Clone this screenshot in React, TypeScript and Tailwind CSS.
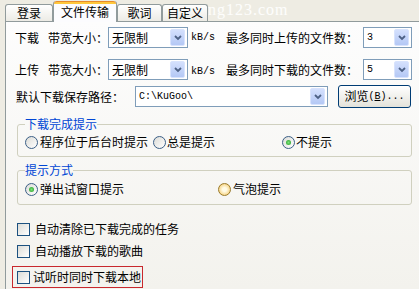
import React from "react";

const Chevron = () => (
  <svg width="8" height="6" viewBox="0 0 8 6">
    <path d="M1 1 L4 4 L7 1" fill="none" stroke="#4d6185" strokeWidth="1.8" />
  </svg>
);

function Combo({ w, text, mono }: { w: string; text: string; mono?: boolean }) {
  return (
    <div className={`flex h-[21px] ${w} items-center border border-[#7f9db9] bg-white pl-[3px] pr-[2px]`}>
      <span
        className={
          mono
            ? "flex-1 font-['Liberation_Mono',monospace] text-[10px] leading-[12px]"
            : "flex-1 leading-[14px]"
        }
      >
        {text}
      </span>
      <div className="flex h-[17px] w-[15px] items-center justify-center rounded-[2px] border border-[#d8e3fd] bg-gradient-to-b from-[#d4e0fd] to-[#b4c8f5]">
        <Chevron />
      </div>
    </div>
  );
}

function Radio({ checked, hover }: { checked?: boolean; hover?: boolean }) {
  if (hover) {
    return (
      <span className="flex h-[13px] w-[13px] shrink-0 items-center justify-center rounded-full border border-[#9a7a2a] bg-[radial-gradient(circle,#fffbe6_25%,#f3c257_100%)]" />
    );
  }
  return (
    <span className="flex h-[13px] w-[13px] shrink-0 items-center justify-center rounded-full border border-[#3b5f86] bg-gradient-to-br from-[#dcdcd7] to-white">
      {checked && <span className="h-[5px] w-[5px] rounded-full bg-[radial-gradient(circle,#7be27a_0%,#1f9a1f_100%)]" />}
    </span>
  );
}

function Checkbox() {
  return <span className="h-[13px] w-[13px] shrink-0 border border-[#1c5180] bg-gradient-to-br from-[#dcdcd7] to-white" />;
}

function Tab({ children, w }: { children: React.ReactNode; w: string }) {
  return (
    <div
      className={`flex h-[17px] ${w} items-center justify-center rounded-t-[3px] border border-b-0 border-[#919b9c] bg-gradient-to-b from-white to-[#ecebe5] leading-[14px]`}
    >
      {children}
    </div>
  );
}

export default function App() {
  return (
    <div className="relative h-[289px] w-[419px] overflow-hidden bg-[#eeece3] font-['Noto_Sans_CJK_SC','Noto_Sans',sans-serif] text-[12px] text-black">
      <span className="pointer-events-none absolute left-[208px] top-[2px] font-['Liberation_Serif',serif] text-[16px] leading-[16px] tracking-[1px] text-white/90">
        ng123.com
      </span>
      {/* tab strip */}
      <div className="flex h-[21px] items-end pl-[5px]">
        <Tab w="w-[48px]">登录</Tab>
        <div className="relative z-10 -mb-px flex h-[21px] w-[64px] flex-col rounded-t-[3px] border-x border-[#919b9c] bg-[#fcfcfe]">
          <div className="h-[3px] rounded-t-[3px] border-t border-[#e68b2c] bg-[#ffc83c]" />
          <div className="flex flex-1 items-center justify-center pb-[2px] leading-[14px]">文件传输</div>
        </div>
        <Tab w="w-[45px]">歌词</Tab>
        <Tab w="w-[46px]">自定义</Tab>
      </div>
      {/* panel */}
      <div className="ml-[5px] h-[268px] border-l border-t border-[#919b9c] bg-gradient-to-b from-[#fdfdfd] to-[#f3f2ed] pl-[9px]">
        {/* row 1 */}
        <div className="mt-[5px] flex h-[21px] items-center">
          <span className="w-[33px]">下载</span>
          <span className="w-[60px]">带宽大小：</span>
          <Combo w="w-[80px]" text="无限制" />
          <span className="ml-[3px] w-[35px] font-['Liberation_Mono',monospace] text-[10px]">kB/s</span>
          <span className="w-[137px]">最多同时上传的文件数：</span>
          <Combo w="w-[49px]" text="3" mono />
        </div>
        {/* row 2 */}
        <div className="mt-[11px] flex h-[21px] items-center">
          <span className="w-[33px]">上传</span>
          <span className="w-[60px]">带宽大小：</span>
          <Combo w="w-[80px]" text="无限制" />
          <span className="ml-[3px] mt-[4px] w-[35px] font-['Liberation_Mono',monospace] text-[10px]">kB/s</span>
          <span className="w-[137px]">最多同时下载的文件数：</span>
          <Combo w="w-[49px]" text="5" mono />
        </div>
        {/* row 3 */}
        <div className="mt-[5px] flex h-[23px] items-center">
          <span className="ml-[1px] w-[119px]">默认下载保存路径：</span>
          <Combo w="w-[193px]" text="C:\KuGoo\" mono />
          <button className="ml-[10px] flex h-[23px] w-[73px] items-center justify-center rounded-[3px] border border-[#003c74] bg-gradient-to-b from-white to-[#e3e2da] pb-[1px]">
            <span>浏览</span>
            <span className="font-['Liberation_Mono',monospace] text-[10px]">
              (<span className="underline">B</span>)...
            </span>
          </button>
        </div>
        {/* group 1 */}
        <fieldset className="ml-[2px] mt-[9px] w-[395px] rounded-[3px] border border-[#d0d0bf] px-[7px] pb-[7px]">
          <legend className="px-0 leading-[14px] text-[#0046d5]">下载完成提示</legend>
          <div className="mt-[4px] flex h-[14px] items-center">
            <div className="flex w-[128px] items-center gap-[2px]">
              <Radio />
              <span className="leading-[14px]">程序位于后台时提示</span>
            </div>
            <div className="flex w-[129px] items-center gap-[1px]">
              <Radio />
              <span className="leading-[14px]">总是提示</span>
            </div>
            <div className="flex items-center gap-[1px]">
              <Radio checked />
              <span className="leading-[14px]">不提示</span>
            </div>
          </div>
        </fieldset>
        {/* group 2 */}
        <fieldset className="ml-[2px] mt-[6px] w-[395px] rounded-[3px] border border-[#d0d0bf] px-[7px] pb-[8px]">
          <legend className="px-0 leading-[14px] text-[#0046d5]">提示方式</legend>
          <div className="mt-[5px] flex h-[14px] items-center">
            <div className="flex w-[193px] items-center gap-[2px]">
              <Radio checked />
              <span className="leading-[14px]">弹出试窗口提示</span>
            </div>
            <div className="flex items-center gap-[2px]">
              <Radio hover />
              <span className="leading-[14px]">气泡提示</span>
            </div>
          </div>
        </fieldset>
        {/* checkboxes */}
        <div className="ml-[2px] mt-[13px] flex h-[22px] items-center gap-[5px]">
          <Checkbox />
          <span className="leading-[14px]">自动清除已下载完成的任务</span>
        </div>
        <div className="ml-[2px] flex h-[22px] items-center gap-[5px]">
          <Checkbox />
          <span className="leading-[14px]">自动播放下载的歌曲</span>
        </div>
        <div className="-ml-[3px] mt-[4px] flex h-[22px] w-[131px] items-center gap-[3px] border border-[#c8282d] pl-[4px]">
          <Checkbox />
          <span className="leading-[14px]">试听时同时下载本地</span>
        </div>
      </div>
    </div>
  );
}
